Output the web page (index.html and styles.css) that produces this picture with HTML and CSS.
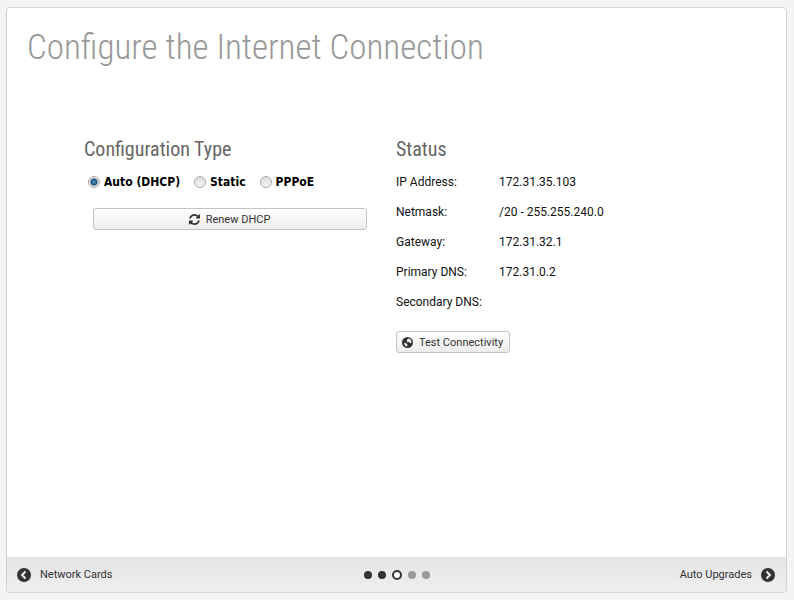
FILE: index.html
```html
<!DOCTYPE html>
<html lang="en">
<head>
    <meta charset="UTF-8">
    <meta name="viewport" content="width=device-width, initial-scale=1">
    <title>Configure the Internet Connection</title>
    <link rel="stylesheet" href="styles.css">
</head>
<body>

    <div class="wizard">
        <main class="content">
            <h1>Configure the Internet Connection</h1>

            <div class="columns">
                <form class="config">
                    <h2 id="config-type">Configuration Type</h2>
                    <div class="types" role="radiogroup" aria-labelledby="config-type">
                        <label><input type="radio" name="type" value="dhcp" checked>Auto (DHCP)</label>
                        <label><input type="radio" name="type" value="static">Static</label>
                        <label><input type="radio" name="type" value="pppoe">PPPoE</label>
                    </div>
                    <button type="button" class="btn btn-wide">
                        <svg class="icon" viewBox="0 0 1536 1536" aria-hidden="true">
                            <path d="M1511 928q0 5-1 7-64 268-268 434.500T764 1536q-146 0-282.500-55T238 1324l-129 129q-19 19-45 19t-45-19-19-45V960q0-26 19-45t45-19h448q26 0 45 19t19 45-19 45l-137 137q71 66 161 102t187 36q134 0 250-65t186-179q11-17 53-117 8-23 30-23h192q13 0 22.500 9.500t9.500 22.500zM1536 128v448q0 26-19 45t-45 19h-448q-26 0-45-19t-19-45 19-45l138-138Q969 256 768 256q-134 0-250 65T332 500q-11 17-53 117-8 23-30 23H50q-13 0-22.500-9.500T18 608v-7q65-268 270-434.500T768 0q146 0 284 55.500T1297 212l130-129q19-19 45-19t45 19 19 45z"/>
                        </svg>
                        Renew DHCP
                    </button>
                </form>

                <section class="status">
                    <h2>Status</h2>
                    <table>
                        <tr><th scope="row">IP Address:</th><td>172.31.35.103</td></tr>
                        <tr><th scope="row">Netmask:</th><td>/20 - 255.255.240.0</td></tr>
                        <tr><th scope="row">Gateway:</th><td>172.31.32.1</td></tr>
                        <tr><th scope="row">Primary DNS:</th><td>172.31.0.2</td></tr>
                        <tr><th scope="row">Secondary DNS:</th><td></td></tr>
                    </table>
                    <button type="button" class="btn">
                        <svg class="icon" viewBox="0 0 16 16" aria-hidden="true">
                            <circle cx="8" cy="8" r="8"/>
                            <path class="land" d="M8 3L10 2L13 4L14 8L12 9L10 7L8 8L7 6ZM3 8L6 9L8 11L7 14L4 12Z"/>
                        </svg>
                        Test Connectivity
                    </button>
                </section>
            </div>
        </main>

        <footer class="bottom">
            <a class="nav" href="#network-cards">
                <svg class="arrow" viewBox="0 0 14 14" aria-hidden="true">
                    <circle cx="7" cy="7" r="7"/>
                    <path d="M8.500 3.500L5 7L8.500 10.500"/>
                </svg>
                Network Cards
            </a>
            <div class="steps">
                <span class="dot"></span>
                <span class="dot"></span>
                <span class="dot current"></span>
                <span class="dot next"></span>
                <span class="dot next"></span>
            </div>
            <a class="nav nav-next" href="#auto-upgrades">
                Auto Upgrades
                <svg class="arrow" viewBox="0 0 14 14" aria-hidden="true">
                    <circle cx="7" cy="7" r="7"/>
                    <path d="M5.500 3.500L9 7L5.500 10.500"/>
                </svg>
            </a>
        </footer>
    </div>

</body>
</html>
```
FILE: styles.css
```css
* {
    box-sizing: border-box;
}

body {
    margin: 0;
    padding: 7px 7px 7px 6px;
    min-height: 100vh;
    display: flex;
    background: #f4f4f4;
    color: #111;
    font-family: Tahoma, Roboto, sans-serif;
    font-size: 12px;
    line-height: 16px;
}

.wizard {
    flex: 1;
    display: flex;
    flex-direction: column;
    background: #fff;
    border: 1px solid #d2d2d2;
    border-radius: 4px;
    overflow: hidden;
}

.content {
    flex: 1;
    padding: 20px;
}

h1, h2 {
    margin: 0;
    font-family: "Roboto Condensed", Roboto, sans-serif;
}

h1 {
    color: #999;
    font-size: 35px;
    font-weight: 300;
    line-height: 40px;
}

h2 {
    color: #666;
    font-size: 20px;
    font-weight: 400;
    line-height: 24px;
}

.columns {
    display: grid;
    grid-template-columns: 283px 1fr;
    column-gap: 29px;
    padding: 69px 56px 0 57px;
}

.types {
    display: flex;
    gap: 14px;
    margin: 13px 0 18px 4px;
}

.types label {
    display: flex;
    align-items: center;
    gap: 4px;
    color: #000;
    font-family: Tahoma, "DejaVu Sans Condensed", sans-serif;
    font-weight: bold;
}

.types input {
    appearance: none;
    width: 12px;
    height: 12px;
    margin: 0;
    border: 1px solid #aaa;
    border-radius: 50%;
    background: linear-gradient(#ddd, #f5f5f5);
}

.types input:checked {
    background: radial-gradient(circle, #5aa5cf 0, #174e77 3px, #e2e2e2 4px);
}

.btn {
    display: inline-flex;
    align-items: center;
    justify-content: center;
    gap: 6px;
    height: 22px;
    padding: 0 6px 0 5px;
    border: 1px solid #c4c4c4;
    border-radius: 3px;
    background: linear-gradient(#fff, #ececec);
    color: #333;
    font-family: inherit;
    font-size: 11px;
}

.btn-wide {
    display: flex;
    width: calc(100% - 9px);
    margin-left: 9px;
}

.icon {
    width: 11px;
    height: 11px;
    fill: #333;
}

.land {
    fill: #eee;
}

table {
    margin: 6px 0 14px;
    border-collapse: collapse;
}

th, td {
    height: 30px;
    padding: 0;
    font-weight: normal;
    text-align: left;
}

th {
    width: 103px;
}

.bottom {
    display: grid;
    grid-template-columns: 1fr auto 1fr;
    align-items: center;
    height: 35px;
    padding: 0 11px 0 10px;
    background: linear-gradient(#e4e4e4, #efefef);
}

.nav {
    display: flex;
    align-items: center;
    gap: 9px;
    color: #333;
    font-size: 11px;
    text-decoration: none;
}

.nav-next {
    justify-content: flex-end;
}

.arrow {
    width: 14px;
    height: 14px;
}

.arrow circle {
    fill: #333;
}

.arrow path {
    fill: none;
    stroke: #eee;
    stroke-width: 2;
}

.steps {
    display: flex;
    align-items: center;
    gap: 6px;
    padding-left: 2px;
}

.dot {
    width: 8px;
    height: 8px;
    border-radius: 50%;
    background: #333;
}

.current {
    width: 10px;
    height: 10px;
    border: 2px solid #333;
    background: #fff;
}

.next {
    background: #999;
}
```
